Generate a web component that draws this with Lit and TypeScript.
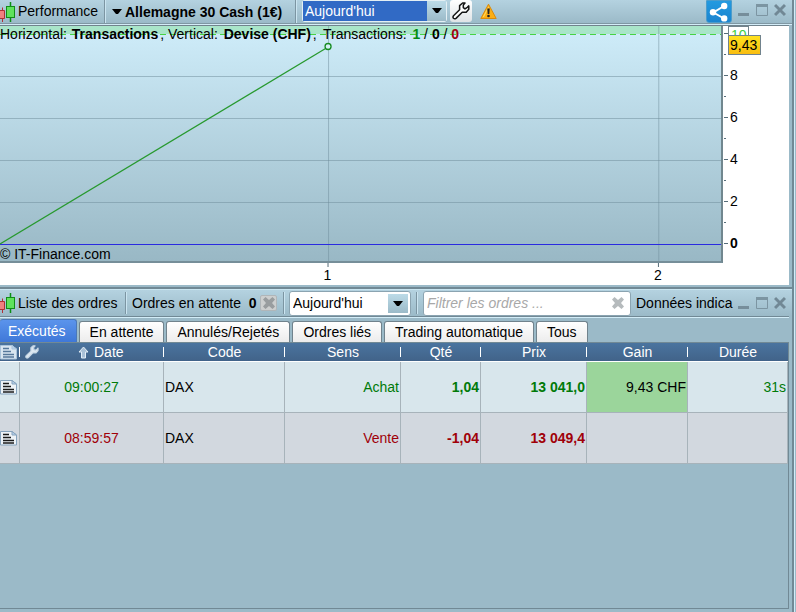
import { LitElement, html, css, svg, nothing } from "lit";
import { customElement, state } from "lit/decorators.js";
import { classMap } from "lit/directives/class-map.js";

const candles = html`<svg class="candles" width="16" height="20" viewBox="0 0 16 20" aria-hidden="true">
  <path d="M0 8.500H4.500V16.500H0M2.500 5.500V8M2.500 17V20" fill="#f08080" stroke="#b03036" />
  <path d="M10.500 0V4M10.500 15.500V20" stroke="#0b8f14" stroke-width="1.500" />
  <rect x="6.500" y="4.500" width="8" height="11" fill="#5fe25c" stroke="#118c18" />
</svg>`;

const caret = html`<svg class="caret" width="10" height="5" viewBox="0 0 10 5" aria-hidden="true">
  <path d="M0 0H10L6 5H4Z" fill="#000" />
</svg>`;

const wrench = (size: number, fill: string, stroke: string) => html`<svg class="wrench" width=${size} height=${size} viewBox="0 0 18 18" aria-hidden="true">
  <path d="M1.500 13.700L7.600 7.800V3.600L10.600 1H13L11.300 3V5.600L13 6.900L15.300 5.300L16.800 3.900V7.200L14.200 10.200H10.200L4 16.400Q2.600 17.300 1.500 16.300Q.5 15 1.500 13.700Z"
    fill=${fill} stroke=${stroke} stroke-width="1.500" stroke-linejoin="round" />
</svg>`;

const warning = html`<svg class="warn" width="17" height="17" viewBox="0 0 17 17" aria-hidden="true">
  <path d="M8.500 1.200L16.200 15.500H.8Z" fill="#fcae13" stroke="#d98a0c" stroke-linejoin="round" />
  <path d="M8.500 3.200L9 4.200L4 14H2.700Z" fill="#ffd75a" />
  <path d="M7.300 5.500H9.700L9.300 11H7.700Z" fill="#222" />
  <circle cx="8.500" cy="13" r="1.300" fill="#222" />
</svg>`;

const share = html`<svg width="20" height="20" viewBox="0 0 20 20" aria-hidden="true">
  <path d="M15 4L4.500 10.500L15 16.500" fill="none" stroke="#fff" stroke-width="2" />
  <circle cx="15.200" cy="4" r="3.200" fill="#fff" /><circle cx="4" cy="10.300" r="3.200" fill="#fff" />
  <circle cx="15.200" cy="16.400" r="3.200" fill="#fff" />
</svg>`;

const clearIcon = (fill: string) => html`<svg width="14" height="14" viewBox="0 0 14 14" aria-hidden="true">
  <path d="M3.500 1L7 4L10.500 1L13 3.500L10 7L13 10.500L10.500 13L7 10L3.500 13L1 10.500L4 7L1 3.500Z" fill=${fill} />
</svg>`;

const sheet = (line: string, paper: string, edge: string) => html`<svg class="sheet" width="18" height="16" viewBox="0 0 18 16" aria-hidden="true">
  <path d="M.5 1.500H12L16.500 5V15H.5Z" fill=${paper} stroke=${edge} />
  <path d="M12 1.500V5H16.500Z" fill="#b9d3ec" stroke=${edge} />
  <path d="M3 4.500H9M3 7.500H11M3 10.500H14M3 13H14" stroke=${line} stroke-width="1.500" />
</svg>`;

const windowButtons = html`<div class="winbtns">
  <button aria-label="Réduire"><svg width="12" height="14" viewBox="0 0 12 14"><path d="M0 11.500H11" stroke="#768e9b" stroke-width="3" /></svg></button>
  <button aria-label="Agrandir"><svg width="12" height="14" viewBox="0 0 12 14"><path d="M.5 1.500H11.500V12.500H.5Z" fill="none" stroke="#7c95a2" /><path d="M0 2.500H12" stroke="#7c95a2" stroke-width="3" /></svg></button>
  <button aria-label="Fermer"><svg width="12" height="14" viewBox="0 0 12 14"><path d="M1 2L11 12M11 2L1 12" stroke="#718895" stroke-width="3" /></svg></button>
</div>`;

const sharedStyles = css`
  :host { font: 14px/16px "Liberation Sans", Arial, sans-serif; color: #000; }
  * { box-sizing: border-box; }
  button, select, input { font: inherit; color: inherit; margin: 0; padding: 0; border: 0; background: none; }
  button { display: flex; align-items: center; justify-content: center; }
  svg { display: block; flex: none; }
  b { font-weight: 700; }
  .bar { display: flex; align-items: center; white-space: nowrap; overflow: hidden; background: linear-gradient(#b4d2e0, #9bbac8); }
  .candles { margin-right: 2px; }
  .sep { flex: none; width: 2px; align-self: stretch; background: #7c95a2; border-right: 1px solid #cbe5f1; }
  .pick { position: relative; flex: none; display: flex; background: #fff; border: 1px solid #8ba4b1; border-radius: 3px; }
  .pick select { appearance: none; width: 100%; padding-left: 3px; outline: 0; }
  .arrow { position: absolute; right: 1px; top: 1px; bottom: 1px; width: 20px; display: flex; align-items: center; justify-content: center; background: linear-gradient(#bcdbe8, #9bbac8); pointer-events: none; }
  .winbtns { flex: none; display: flex; gap: 6px; margin-right: 6px; }
  .winbtns button { width: 12px; height: 14px; }
`;

@customElement("performance-panel")
class PerformancePanel extends LitElement {
  static styles = [sharedStyles, css`
    :host { display: block; }
    .bar { height: 23px; }
    .name { padding-bottom: 2px; width: 86px; }
    .title { width: 183px; gap: 3px; justify-content: flex-start; margin-left: 6px; font-weight: 700; }
    .pick { width: 145px; height: 22px; margin: 0 3px 2px 5px; border-color: #e4eff4; }
    .pick select { color: #fff; background: #316ac5; margin-right: 19px; padding-left: 2px; }
    .pick .arrow { width: 19px; right: 0; top: 0; bottom: 0; }
    .tool { width: 22px; height: 22px; margin-bottom: 2px; background: linear-gradient(#fff, #dfe3e6); border-radius: 3px; }
    .warn { margin-left: 8px; }
    .share { width: 26px; height: 23px; margin: 0 6px 0 auto; background: linear-gradient(#239ae0, #1b84cf); border: 1px solid #4c9ccb; border-radius: 0 0 3px 3px; }
    .winbtns { padding-bottom: 3px; }
    .body { display: grid; grid-template-columns: 1fr 66px; grid-template-rows: 237px 22px; background: #fff; border-top: 1px solid #71838d; margin-right: 3px; }
    .rule { height: 2px; background: #d3edf8; border-top: 1px solid #7f97a3; }
    .plot { position: relative; border-right: 2px solid #71878f; border-bottom: 2px solid #768e99; background: linear-gradient(#cfedfa, #99b8c5); overflow: hidden; }
    .plot > svg, .xaxis svg, .yaxis svg { width: 100%; height: 100%; }
    .legend { position: absolute; left: 0; top: 0; display: flex; white-space: pre; }
    .horizontal { min-width: 168px; }
    .vertical { min-width: 155px; }
    .horizontal b { margin-left: 1px; margin-right: 2px; }
    .vertical b { margin-left: 2px; margin-right: 2px; }
    .count b:first-child { margin-left: 2px; }
    .credit { position: absolute; left: 0; bottom: -1px; }
    .pos { color: #078a13; }
    .neg { color: #a00012; }
    .yaxis { position: relative; }
    .limit, .value { position: absolute; left: 5px; border: 1px solid #71838d; }
    .limit { top: 0; height: 12px; width: 21px; color: #43cf43; padding: 0 2px; overflow: hidden; background: #fff; }
    .value { top: 9px; width: 33px; height: 20px; line-height: 18px; padding: 0 1px; background: linear-gradient(#ffe21e, #f9bd11); white-space: nowrap; }
    text { font: 14px "Liberation Sans", Arial, sans-serif; }
    .zero { font-weight: 700; }
  `];

  render() {
    const top = 8;
    const unit = 21;
    const y = (v: number) => top + (10 - v) * unit;
    const base = y(0);
    return html`
      <div class="bar">
        ${candles}<span class="name">Performance</span><span class="sep"></span>
        <button class="title">${caret}Allemagne 30 Cash (1€)</button><span class="sep"></span>
        <div class="pick">
          <select aria-label="Période"><option>Aujourd'hui</option></select><span class="arrow">${caret}</span>
        </div>
        <button class="tool" aria-label="Réglages">${wrench(18, "#fff", "#151515")}</button>
        ${warning}
        <button class="share" aria-label="Partager">${share}</button>
        ${windowButtons}
      </div>
      <div class="rule"></div>
      <div class="body">
        <div class="plot">
          <svg>
            <rect width="100%" height=${top} fill="#a9e5c9" />
            ${[8, 6, 4, 2].map((v) => svg`<rect width="100%" height="1" y=${y(v)} fill="#6e8c99" fill-opacity=".5" />`)}
            <rect x="45.500%" width="1" height="100%" fill="#6e8c99" fill-opacity=".5" />
            <rect x="91.300%" width="1" height="100%" fill="#6e8c99" fill-opacity=".5" />
            <line x1="0" x2="100%" y1="8.500" y2="8.500" stroke="#46d343" stroke-dasharray="6 4" />
            <rect width="100%" height="1" y=${base} fill="#2a2ae0" />
            <line x1="0" y1=${base} x2="45.500%" y2="21" stroke="#27992e" stroke-width="1.300" />
            <circle cx="45.500%" cy="20.500" r="3" fill="#d4f0f6" stroke="#168b20" stroke-width="1.300" />
          </svg>
          <div class="legend">
            <span class="horizontal">Horizontal: <b>Transactions</b>,</span>
            <span class="vertical">Vertical: <b>Devise (CHF)</b>,</span>
            <span class="count">Transactions: <b class="pos">1</b> / <b>0</b> / <b class="neg">0</b></span>
          </div>
          <div class="credit">© IT-Finance.com</div>
        </div>
        <div class="yaxis">
          <svg>
            ${[10, 9, 8, 7, 6, 5, 4, 3, 2, 1, 0].map((v) => svg`<rect x="1" y=${y(v) - 1} width=${v % 2 ? 2 : 4} height="1" fill="#566d79" />`)}
            ${[8, 6, 4, 2, 0].map((v) => svg`<text class=${v ? "" : "zero"} x="7" y=${y(v) + 4}>${v}</text>`)}
          </svg>
          <div class="limit">10</div>
          <div class="value">9,43</div>
        </div>
        <div class="xaxis">
          <svg>
            ${[["45.300%", 1], ["91%", 2]].map(([x, v]) => svg`<rect x=${x} y="0" width="1" height="4" fill="#566d79" /><text x=${x} y="17" text-anchor="middle">${v}</text>`)}
          </svg>
        </div>
      </div>`;
  }
}

interface Order { time: string; code: string; side: string; qty: string; price: string; gain: string; span: string; buy: boolean; }

const orders: Order[] = [
  { time: "09:00:27", code: "DAX", side: "Achat", qty: "1,04", price: "13 041,0", gain: "9,43 CHF", span: "31s", buy: true },
  { time: "08:59:57", code: "DAX", side: "Vente", qty: "-1,04", price: "13 049,4", gain: "", span: "", buy: false },
];

@customElement("orders-panel")
class OrdersPanel extends LitElement {
  static styles = [sharedStyles, css`
    :host { display: flex; flex-direction: column; }
    .bar { height: 26px; }
    .rule { height: 2px; margin-right: 3px; background: #d3edf8; border-top: 1px solid #718995; }
    .sep { margin: 2px 0; }
    .list { width: 107px; }
    .pending { width: 129px; margin-left: 5px; white-space: pre; }
    .pending b { margin-left: 4px; }
    .cancel { width: 17px; height: 16px; background: #cdcfcf; border: 1px solid #b0b6b9; border-radius: 2px; margin: 0 6px 0 -1px; }
    .pick { width: 122px; height: 25px; margin: 0 5px 0 4px; }
    .pick .arrow { right: 2px; top: 2px; bottom: 2px; }
    .filter { display: flex; align-items: center; flex: 1; min-width: 60px; height: 25px; margin: 0 5px; padding: 0 5px 0 3px; background: #fff; border: 1px solid #8ba4b1; border-radius: 3px; }
    .filter input { flex: 1; min-width: 0; outline: 0; }
    .filter input::placeholder { color: #a8a8a8; font-style: italic; opacity: 1; }
    .data { width: 98px; overflow: hidden; margin-right: 4px; }
    .tabs { display: flex; align-items: flex-end; gap: 2px; height: 24px; padding-top: 1px; }
    .tab { height: 21px; padding: 0 10px; background: linear-gradient(#fff, #ececec); border: 1px solid #71838d; border-bottom: 0; border-radius: 3px 3px 0 0; white-space: nowrap; }
    .tab.on { height: 23px; color: #fff; background: linear-gradient(#5b94ec, #3f78d8); border-color: #4b78b8; border-left: 0; padding: 0 10px 0 8px; }
    .box { flex: 1; margin: 0 3px 3px 0; border: 1px solid #718995; border-left: 0; }
    table { width: 100%; table-layout: fixed; border-collapse: separate; border-spacing: 0; }
    th { position: relative; height: 19px; padding: 0; font-weight: 400; color: #fff; background: linear-gradient(#4a749f, #416389); border-bottom: 1px solid #fff; }
    th:not(:last-child)::after { content: ""; position: absolute; right: 0; top: 4px; width: 1px; height: 10px; background: #fff; }
    .date { display: flex; align-items: center; }
    .date .up { margin: 0 5px 0 39px; }
    .date .wrench { margin-left: 5px; }
    td { height: 51px; padding: 0 1px; border-right: 1px solid #a7b3ba; border-bottom: 1px solid #a7b3ba; text-align: right; white-space: nowrap; }
    .buy td { background: #d8e6ec; color: #007a08; }
    .sell td { background: #d2d8df; color: #a00008; }
    td.icon { padding: 0; }
    td.time { text-align: center; }
    td.code { text-align: left; }
    .buy td.code, .sell td.code, .buy td.gain { color: #000; }
    .buy td.gain { background: #9bd59b; }
    .c0 { width: 20px; } .c1 { width: 144px; } .c2 { width: 121px; } .c3 { width: 116px; }
    .c4 { width: 80px; } .c5 { width: 106px; } .c6 { width: 101px; }
  `];

  @state() private active = 0;

  private tabs = ["Exécutés", "En attente", "Annulés/Rejetés", "Ordres liés", "Trading automatique", "Tous"];

  render() {
    return html`
      <div class="bar">
        ${candles}<span class="list">Liste des ordres</span><span class="sep"></span>
        <span class="pending">Ordres en attente <b>0</b></span>
        <button class="cancel" aria-label="Annuler les ordres">${clearIcon("#999d9f")}</button><span class="sep"></span>
        <div class="pick">
          <select aria-label="Période"><option>Aujourd'hui</option></select><span class="arrow">${caret}</span>
        </div><span class="sep"></span>
        <div class="filter">
          <input type="text" aria-label="Filtrer les ordres" placeholder="Filtrer les ordres ..." />
          <button aria-label="Effacer">${clearIcon("#b6bbbd")}</button>
        </div>
        <span class="data">Données indica</span>
        ${windowButtons}
      </div>
      <div class="rule"></div>
      <div class="tabs" role="tablist">
        ${this.tabs.map((t, i) => html`<button role="tab" aria-selected=${i === this.active}
          class=${classMap({ tab: true, on: i === this.active })} @click=${() => (this.active = i)}>${t}</button>`)}
      </div>
      <div class="box">
        <table>
          <colgroup>${[0, 1, 2, 3, 4, 5, 6].map((n) => html`<col class="c${n}" />`)}<col /></colgroup>
          <thead><tr>
            <th>${sheet("#56789a", "#d9e6f0", "#a9c3da")}</th>
            <th><div class="date">
              ${wrench(14, "#dde8f2", "#c4d5e4")}
              <svg class="up" width="11" height="13" viewBox="0 0 11 13" aria-hidden="true"><path d="M5.500 1L10 6H7.500V12H3.500V6H1Z" fill="#a9c0d6" stroke="#e3eef7" /></svg>
              Date</div></th>
            ${["Code", "Sens", "Qté", "Prix", "Gain", "Durée"].map((h) => html`<th>${h}</th>`)}
          </tr></thead>
          <tbody>
            ${orders.map((o) => html`<tr class=${o.buy ? "buy" : "sell"}>
              <td class="icon">${sheet("#1b1b1b", "#eef3f7", "#86a3bd")}</td>
              <td class="time">${o.time}</td><td class="code">${o.code}</td><td>${o.side}</td>
              <td><b>${o.qty}</b></td><td><b>${o.price}</b></td>
              <td class="gain">${o.gain || nothing}</td><td>${o.span || nothing}</td>
            </tr>`)}
          </tbody>
        </table>
      </div>`;
  }
}

@customElement("app-root")
class AppRoot extends LitElement {
  static styles = css`
    :host { display: flex; min-height: 100vh; background: #9bbac8; }
    .stack { flex: 1; min-width: 0; display: flex; flex-direction: column; }
    .split { height: 2px; margin-top: 2px; background: #718995; border-bottom: 1px solid #c9e5f0; }
    .edge { flex: none; width: 2px; border-left: 2px solid #718995; background: linear-gradient(90deg, #d0ecf7 1px, #9bbac8 1px); }
    orders-panel { flex: 1; }
  `;

  render() {
    return html`
      <div class="stack">
        <performance-panel></performance-panel>
        <div class="split"></div>
        <orders-panel></orders-panel>
      </div>
      <div class="edge"></div>`;
  }
}
